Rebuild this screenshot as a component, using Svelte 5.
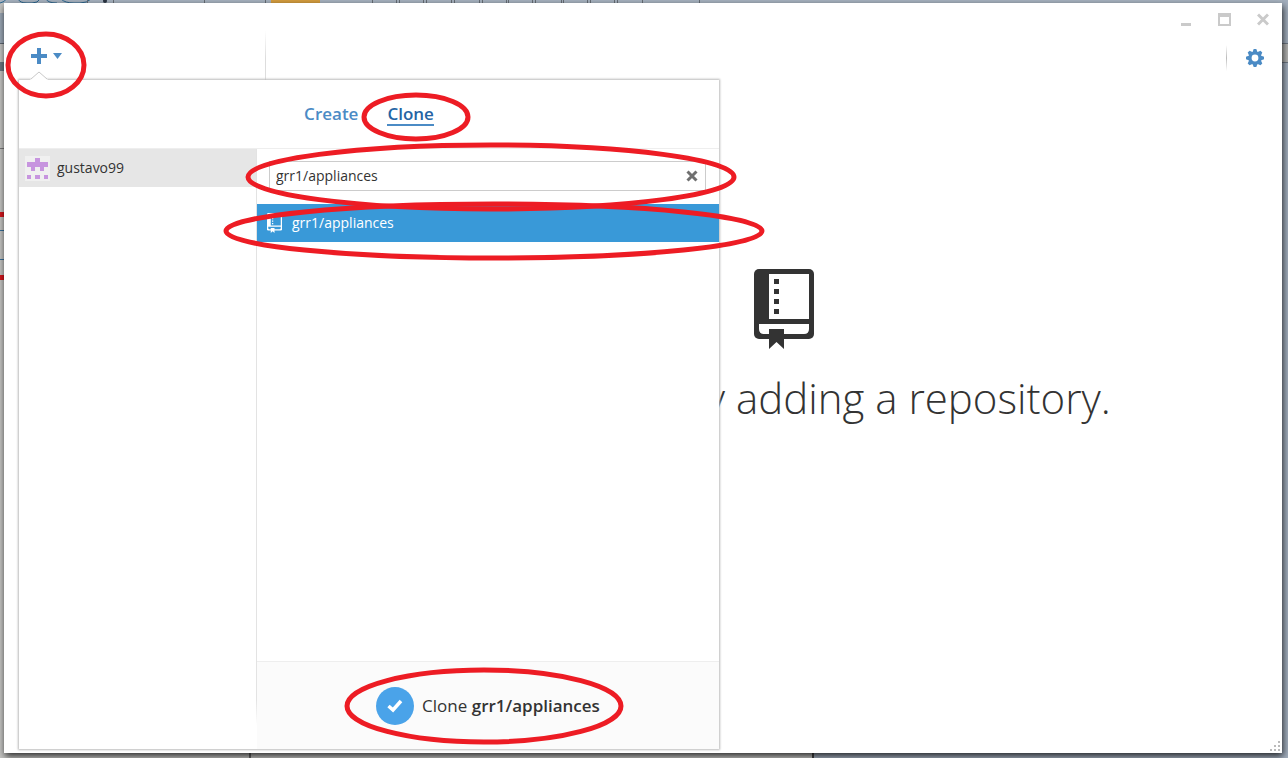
<script>
  let query = $state('grr1/appliances');
  const repo = 'grr1/appliances';
  const toolbarMarks = [87, 113, 204, 265, 372, 396, 399, 423, 426, 451, 454, 479, 482, 506, 508, 532, 535, 561, 563, 587, 590, 614, 617, 642, 699];
  const rings = [
    { cx: 46, cy: 65, rx: 38, ry: 31 },
    { cx: 416, cy: 117, rx: 52, ry: 22 },
    { cx: 491, cy: 177, rx: 243, ry: 32 },
    { cx: 494, cy: 231, rx: 268, ry: 27 },
    { cx: 484, cy: 706, rx: 137, ry: 36 }
  ];
</script>

{#snippet book(ink, paper)}
  <rect width="60" height="70" rx="5" fill={ink} />
  <path d="M15 5H55V50H15ZM5 55H55V60Q55 65 50 65H10Q5 65 5 60Z" fill={paper} />
  <path d="M20 10h5v5h-5zM20 20h5v5h-5zM20 30h5v5h-5zM20 40h5v5h-5zM15 60H30V80L22.500 73L15 80Z" fill={ink} />
{/snippet}

<div class="desktop">
  <svg class="backdrop" aria-hidden="true">
    <rect width="100%" height="3" fill="#a8b4c1" />
    <path d="M0 3Q4 3 8 -3M18 -1Q20 3 27 3H32Q38 3 40 -1M46 -1Q48 3 57 3M61 -1Q65 3 74 3H80Q87 3 91 -1" fill="none" stroke="#28658f" />
    <rect x="271" width="49" height="3" fill="#d79f3f" />
    {#each toolbarMarks as x}
      <rect {x} width="1" height="3" fill="#686f77" />
    {/each}
    <circle cx="105" cy="1" r="2" fill="#2b3542" />
    <rect y="13" width="5" height="31" fill="#9aa6b4" />
    <rect y="43" width="5" height="1" fill="#5d6670" />
    <rect y="62" width="5" height="9" fill="#6b7580" />
    <rect y="148" width="5" height="1" fill="#777" />
    <rect y="212" width="5" height="5" fill="#d4161c" />
    <rect y="230" width="5" height="1" fill="#37709b" />
    <rect y="259" width="5" height="1" fill="#37709b" />
    <rect y="275" width="5" height="5" fill="#d4161c" />
    <rect x="1282" width="6" height="758" fill="#a3afbe" />
    <rect x="1282" y="43" width="6" height="20" fill="#b5b5b3" />
    <path d="M1282 43.500H1288M1282 62.500H1288" stroke="#6f7984" />
    <rect x="814" y="753" width="474" height="5" fill="#a3afbe" />
    <rect x="249" y="753" width="2" height="5" fill="#666" />
    <rect x="812" y="753" width="2" height="5" fill="#444" />
  </svg>

  <div class="window">
    <aside class="side">
      <button class="add" aria-label="Add repository">
        <svg width="32" height="16" viewBox="0 0 32 16" aria-hidden="true">
          <path d="M6 0h4v6h6v4h-6v6H6v-6H0V6h6z" fill="#4b8bc5" />
          <path d="M22 5h9l-4.500 6z" fill="#4b8bc5" />
        </svg>
      </button>
    </aside>

    <main class="main">
      <header class="bar">
        <div class="controls">
          <button aria-label="Minimize"><svg width="12" height="13" viewBox="0 0 12 13"><path d="M1 10h10v3H1z" fill="#cacaca" /></svg></button>
          <button aria-label="Maximize"><svg width="13" height="13" viewBox="0 0 13 13"><path fill-rule="evenodd" d="M0 0h13v13H0zM2 4v7h9V4z" fill="#cacaca" /></svg></button>
          <button aria-label="Close"><svg width="12" height="13" viewBox="0 0 12 13"><path d="M1 1.500L11 11.500M11 1.500L1 11.500" stroke="#cacaca" stroke-width="3" /></svg></button>
        </div>
        <div class="tools">
          <span class="rule"></span>
          <button aria-label="Settings">
            <svg width="18" height="18" viewBox="-9 -9 18 18">
              <g fill="#4b8bc5">
                {#each [0, 45, 90, 135, 180, 225, 270, 315] as turn}
                  <path d="M-2.800 -5L-1.300 -9H1.300L2.800 -5Z" transform="rotate({turn})" />
                {/each}
              </g>
              <circle r="5" fill="#fff" stroke="#4b8bc5" stroke-width="3.200" />
            </svg>
          </button>
        </div>
      </header>

      <section class="empty">
        <svg width="60" height="80" viewBox="0 0 60 80" aria-hidden="true">{@render book('#333', '#fff')}</svg>
        <h1>Get started by adding a repository.</h1>
      </section>
      <svg class="grip" width="12" height="12" viewBox="0 0 12 12" aria-hidden="true">
        <path d="M9 1h2v2H9zM9 5h2v2H9zM5 5h2v2H5zM9 9h2v2H9zM5 9h2v2H5zM1 9h2v2H1z" fill="#bbb" />
      </svg>
    </main>

    <div class="popup">
      <svg class="tip" width="18" height="9" viewBox="0 0 18 9" aria-hidden="true">
        <path d="M0 9L9 1L18 9Z" fill="#fff" /><path d="M1 8L9 1L17 8" fill="none" stroke="#c9c9c9" />
      </svg>
      <nav class="tabs">
        <a href="#create">Create</a>
        <a href="#clone" class="active" aria-current="page">Clone</a>
      </nav>
      <div class="columns">
        <div class="accounts">
          <button class="account">
            <svg width="25" height="25" viewBox="0 0 25 25" aria-hidden="true">
              <rect width="25" height="25" fill="#f0f0f0" />
              <path d="M10 2h5v4h8v5h-4v4h-4v-4h-5v4H6v-4H2V6h8zM2 19h4v4H2zM10 19h5v4h-5zM19 19h4v4h-4z" fill="#c795df" />
            </svg>
            gustavo99
          </button>
        </div>
        <div class="content">
          <div class="search">
            <input type="text" aria-label="Filter repositories" bind:value={query} />
            <button aria-label="Clear filter" onclick={() => (query = '')}>
              <svg width="12" height="12" viewBox="0 0 12 12"><path d="M1.500 1.500L10.500 10.500M10.500 1.500L1.500 10.500" stroke="#707070" stroke-width="3" /></svg>
            </button>
          </div>
          <button class="repo">
            <svg width="15" height="20" viewBox="0 0 60 80" aria-hidden="true">{@render book('#fff', '#3999d8')}</svg>
            {repo}
          </button>
          <footer class="footer">
            <button class="clone">
              <span class="check"><svg width="16" height="14" viewBox="0 0 16 14"><path d="M1.500 7L6 11L14 2" fill="none" stroke="#fff" stroke-width="3.500" /></svg></span>
              <span>Clone <b>{repo}</b></span>
            </button>
          </footer>
        </div>
      </div>
    </div>
  </div>

  <svg class="rings" aria-hidden="true">
    {#each rings as ring}
      <ellipse {...ring} fill="none" stroke="#ed1c24" stroke-width="5" />
    {/each}
  </svg>
</div>

<style>
  :global(body) {
    margin: 0;
    background: #c4c4c2;
  }
  .desktop {
    position: relative;
    display: flex;
    box-sizing: border-box;
    min-height: 100vh;
    padding: 3px 6px 5px 4px;
    overflow: hidden;
    color: #333;
    font: 14px/20px "Segoe UI", "Open Sans", "Noto Sans", sans-serif;
  }
  .backdrop,
  .rings {
    position: absolute;
    top: 0;
    left: 0;
    width: 100%;
    height: 100%;
    pointer-events: none;
  }
  button {
    padding: 0;
    border: 0;
    background: none;
    color: inherit;
    font: inherit;
    text-align: left;
    cursor: pointer;
  }
  svg {
    display: block;
  }
  .window {
    position: relative;
    display: flex;
    flex: 1;
    background: #fff;
    box-shadow: 1px 3px 7px rgba(0, 0, 0, 0.8);
  }
  .side {
    box-sizing: border-box;
    width: 262px;
    padding: 45px 27px;
    border-right: 1px solid;
    border-image: linear-gradient(#fff 28px, #ddd 56px, #ddd 600px, #fff 700px) 1;
  }
  .main {
    position: relative;
    display: flex;
    flex: 1;
    flex-direction: column;
  }
  .bar {
    display: flex;
    flex-direction: column;
    align-items: flex-end;
    gap: 19px;
    padding: 10px 13px 0 0;
  }
  .controls {
    display: flex;
    gap: 26px;
  }
  .tools {
    display: flex;
    align-items: center;
    gap: 19px;
    padding-right: 5px;
  }
  .rule {
    width: 1px;
    height: 26px;
    background: linear-gradient(#fff, #bbb, #fff);
  }
  .empty {
    display: flex;
    flex-direction: column;
    align-items: center;
    gap: 18px;
    padding: 198px 0 0 20px;
  }
  h1 {
    margin: 0;
    font-size: 42px;
    font-weight: 300;
    line-height: 62px;
    white-space: nowrap;
  }
  .grip {
    position: absolute;
    right: 1px;
    bottom: 1px;
  }
  .popup {
    position: absolute;
    top: 77px;
    bottom: 4px;
    left: 15px;
    display: flex;
    flex-direction: column;
    width: 700px;
    background: #fff;
    box-shadow: 0 0 2px 1px #bbb;
  }
  .tip {
    position: absolute;
    top: -9px;
    left: 11px;
  }
  .tabs {
    display: flex;
    justify-content: center;
    gap: 29px;
    box-sizing: border-box;
    height: 69px;
    padding-top: 24px;
    border-bottom: 1px solid #eee;
    font-size: 17px;
    font-weight: 600;
  }
  .tabs a {
    height: 20px;
    border-bottom: 2px solid transparent;
    color: #4b8bc5;
    text-decoration: none;
  }
  .tabs .active {
    border-color: #4b8bc5;
    color: #2464a4;
  }
  .columns {
    display: flex;
    flex: 1;
  }
  .accounts {
    box-sizing: border-box;
    width: 238px;
    border-right: 1px solid;
    border-image: linear-gradient(#e3e3e3 550px, #fff 575px) 1;
  }
  .account {
    display: flex;
    align-items: center;
    gap: 7px;
    width: 100%;
    height: 38px;
    padding-left: 6px;
    background: #e6e6e6;
  }
  .content {
    display: flex;
    flex: 1;
    flex-direction: column;
  }
  .search {
    display: flex;
    align-items: center;
    box-sizing: border-box;
    height: 30px;
    margin: 12px 13px 13px 12px;
    padding: 0 7px 0 6px;
    border: 1px solid #ccc;
  }
  input {
    flex: 1;
    min-width: 0;
    padding: 0;
    border: 0;
    outline: 0;
    background: none;
    color: inherit;
    font: inherit;
  }
  .repo {
    display: flex;
    align-items: center;
    gap: 10px;
    height: 38px;
    padding-left: 10px;
    background: #3999d8;
    color: #fff;
  }
  .footer {
    display: flex;
    align-items: center;
    justify-content: center;
    box-sizing: border-box;
    height: 88px;
    margin-top: auto;
    border-top: 1px solid #eee;
    background: #fbfbfb;
  }
  .clone {
    display: flex;
    align-items: center;
    gap: 8px;
    font-size: 17px;
  }
  .clone b {
    font-weight: 600;
  }
  .check {
    display: grid;
    place-items: center;
    width: 38px;
    height: 38px;
    border-radius: 50%;
    background: #4aa3e9;
  }
</style>
